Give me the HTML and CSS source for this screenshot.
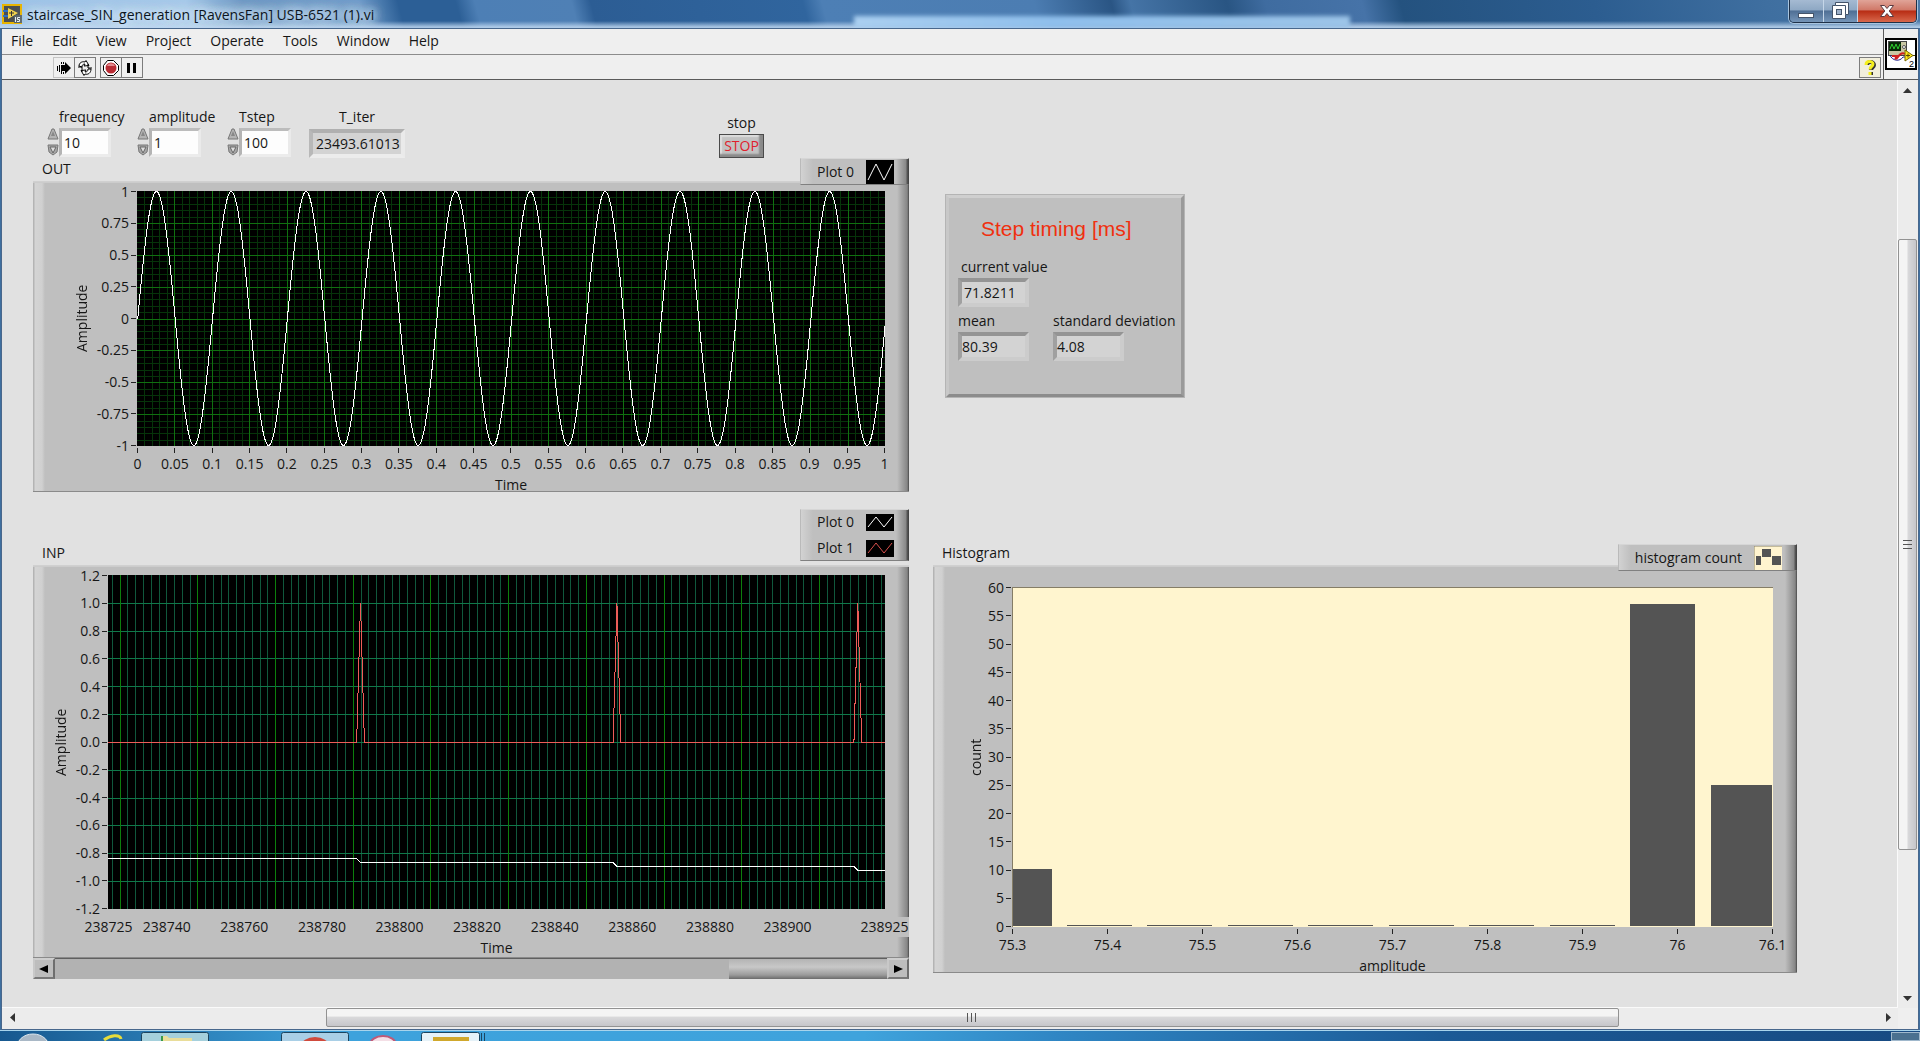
FILE: index.html
```html
<!DOCTYPE html>
<html lang="en">
<head>
<meta charset="utf-8">
<title>staircase_SIN_generation</title>
<link rel="stylesheet" href="styles.css">
</head>
<body>
<header class="titlebar">
  <svg class="app-icon" width="20" height="20" viewBox="0 0 20 20" aria-hidden="true">
    <rect x="1" y="1" width="18" height="18" fill="#4a4f52" stroke="#e8b400" stroke-width="2"/>
    <path d="M6 4 L16 9 L6 15 Z" fill="#f4d44c"/>
    <path d="M1 7h5M1 12h5" stroke="#2b6fc2" stroke-width="2"/>
    <path d="M7 9h5M9.500 7v5" stroke="#333" stroke-width="1"/>
    <path d="M12 11h8v8h-8z" fill="#5a6468"/>
    <path d="M13.500 13v5M18 13.500h-2.500v2h2v2h-2.500" stroke="#e8eef2" stroke-width="1" fill="none"/>
  </svg>
  <h1 class="title">staircase_SIN_generation [RavensFan] USB-6521 (1).vi</h1>
  <div class="behind"></div>
  <div class="win-buttons">
    <button class="win-btn" aria-label="Minimize"><svg width="18" height="18" viewBox="0 0 18 18"><rect x="1.500" y="11.500" width="15" height="4" fill="#fff" stroke="#44546a"/></svg></button>
    <button class="win-btn" aria-label="Restore"><svg width="18" height="18" viewBox="0 0 18 18"><path d="M4.500 .5h13v12h-3v4h-13v-13h3z" fill="#fff" stroke="#44546a"/><path d="M4.500 3.500h10v9" fill="none" stroke="#44546a"/><rect x="5.500" y="7.500" width="5" height="5" fill="#9db0c8" stroke="#44546a"/></svg></button>
    <button class="win-btn win-close" aria-label="Close"><svg width="18" height="18" viewBox="0 0 18 18"><path d="M2.500 3.500h4l2.500 3 2.500-3h4l-4.300 5.500 4.300 5.500h-4l-2.500-3-2.500 3h-4l4.300-5.500z" fill="#fff" stroke="#5a3a40"/></svg></button>
  </div>
</header>

<div class="window">
  <div class="bars">
    <div class="bars-main">
      <nav class="menu">
        <button>File</button><button>Edit</button><button>View</button><button>Project</button><button>Operate</button><button>Tools</button><button>Window</button><button>Help</button>
      </nav>
      <div class="toolbar">
        <button class="tool tool-run" aria-label="Run"><svg width="18" height="18" viewBox="0 0 18 18"><path d="M7 6h3V3l6 6-6 6v-3H7z"/><path d="M2.500 7v5M4.500 6v7M6.500 6v7" stroke="#000"/><path d="M6.500 3v2M8.500 3v2M6.500 13v2M8.500 13v2" stroke="#000"/></svg></button>
        <button class="tool" aria-label="Run continuously"><svg width="18" height="18" viewBox="0 0 18 18" fill="#fff" stroke="#000"><path d="M3 7c0-3 3-5 6-4l1-1.500 3 5-5 .5 1-2c-2 0-3 1-3 3z"/><path d="M15 10c0 4-3 6-6 5l-1 1.500-3-5 5-.5-1 2c2 0 3-1 3-3z"/><path d="M2 8h4v5M16 9h-4V5" fill="none"/></svg></button>
        <button class="tool tool-abort" aria-label="Abort"><svg width="18" height="18" viewBox="0 0 18 18"><path d="M5.500 1.500h6l5 5v5l-5 5h-6l-4-5v-5z" fill="#fff" stroke="#000"/><circle cx="9" cy="9" r="5.500" fill="#b82c34"/><path d="M5 7c1-3 6-4 8 0z" fill="#e28a8e"/></svg></button>
        <button class="tool" aria-label="Pause"><svg width="18" height="18" viewBox="0 0 18 18"><path d="M4 4h3v10H4zM10 4h3v10h-3z"/></svg></button>
        <button class="tool tool-help" aria-label="Context help"><svg width="18" height="18" viewBox="0 0 18 18" fill="none"><path d="M6 6c0-4 7-4 7 0 0 3-3 2-3 5M10 13v3" stroke="#333" stroke-width="4"/><path d="M5 6c0-5 7-4 7-1 0 3-3 2-3 5.500M9 13v3" stroke="#f5f01c" stroke-width="3"/></svg></button>
      </div>
    </div>
    <div class="vi-icon">
      <svg width="32" height="32" viewBox="0 0 32 32" aria-label="VI icon">
        <rect x="1" y="1" width="30" height="30" fill="#fff" stroke="#000" stroke-width="2"/>
        <rect x="3.500" y="3.500" width="18" height="14" fill="#c9c7a4" stroke="#444"/>
        <rect x="4" y="4" width="12" height="9" fill="#082808"/>
        <path d="M5 11l2-5 2 5 2-5 2 5 2-5" fill="none" stroke="#2fd02f"/>
        <circle cx="19" cy="9" r="1.500" fill="#fff" stroke="#555"/>
        <path d="M5 17c2 6 10 7 13 2h3" fill="none" stroke="#20208c"/>
        <path d="M7 18h5c-3 3-1 4 1 1s4-5 7-3" fill="none" stroke="#d02020" stroke-width="2"/>
        <path d="M20 12l8 5.500-8 5.500z" fill="#ffe81c" stroke="#7a6a00"/><path d="M28 17.500h2M21 17.500h4M23 15.500v4" stroke="#5a4800"/>
        <text x="24" y="29" class="vi-num">2</text>
      </svg>
    </div>
  </div>

  <div class="work">
    <main class="panel">
      <section class="col">
        <div class="controls">
          <div class="numeric">
            <div class="spin"><button aria-label="Increase frequency"><svg width="12" height="12" viewBox="0 0 12 12"><path d="M1 11l4-10h2l4 10z" fill="#b4b4b4" stroke="#777"/><path d="M4 8l2-5 2 5z" fill="#888"/></svg></button><button aria-label="Decrease frequency"><svg width="12" height="12" viewBox="0 0 12 12"><path d="M1 1h10l-1 7-4 3-4-3z" fill="#a8a8a8" stroke="#777"/><path d="M3 3h6l-3 6z" fill="#ddd" stroke="#666"/></svg></button></div>
            <label for="freq">frequency</label><input id="freq" type="text" value="10">
          </div>
          <div class="numeric">
            <div class="spin"><button aria-label="Increase amplitude"><svg width="12" height="12" viewBox="0 0 12 12"><path d="M1 11l4-10h2l4 10z" fill="#b4b4b4" stroke="#777"/><path d="M4 8l2-5 2 5z" fill="#888"/></svg></button><button aria-label="Decrease amplitude"><svg width="12" height="12" viewBox="0 0 12 12"><path d="M1 1h10l-1 7-4 3-4-3z" fill="#a8a8a8" stroke="#777"/><path d="M3 3h6l-3 6z" fill="#ddd" stroke="#666"/></svg></button></div>
            <label for="ampl">amplitude</label><input id="ampl" type="text" value="1">
          </div>
          <div class="numeric">
            <div class="spin"><button aria-label="Increase Tstep"><svg width="12" height="12" viewBox="0 0 12 12"><path d="M1 11l4-10h2l4 10z" fill="#b4b4b4" stroke="#777"/><path d="M4 8l2-5 2 5z" fill="#888"/></svg></button><button aria-label="Decrease Tstep"><svg width="12" height="12" viewBox="0 0 12 12"><path d="M1 1h10l-1 7-4 3-4-3z" fill="#a8a8a8" stroke="#777"/><path d="M3 3h6l-3 6z" fill="#ddd" stroke="#666"/></svg></button></div>
            <label for="tstep">Tstep</label><input id="tstep" type="text" value="100">
          </div>
          <div class="readout readout-iter"><label for="titer">T_iter</label><output id="titer" class="field">23493.61013</output></div>
          <div class="stop"><label for="stop">stop</label><button id="stop" class="stop-btn">STOP</button></div>
        </div>

        <div class="chart-head">
          <h2>OUT</h2>
          <div class="legend legend-join"><span class="legend-row">Plot 0 <svg width="28" height="24" viewBox="0 0 28 24"><rect width="28" height="24"/><path d="M2 20L10 4l8 16 8-16" fill="none" stroke="#fff"/></svg></span></div>
        </div>
        <div class="chart chart-out">
          <div class="y-title">Amplitude</div>
          <div class="y-axis"><span>1</span><span>0.75</span><span>0.5</span><span>0.25</span><span>0</span><span>-0.25</span><span>-0.5</span><span>-0.75</span><span>-1</span></div>
          <svg class="plot" id="plot-out" viewBox="0 0 748 255" preserveAspectRatio="none"></svg>
          <div class="x-axis"><span>0</span><span>0.05</span><span>0.1</span><span>0.15</span><span>0.2</span><span>0.25</span><span>0.3</span><span>0.35</span><span>0.4</span><span>0.45</span><span>0.5</span><span>0.55</span><span>0.6</span><span>0.65</span><span>0.7</span><span>0.75</span><span>0.8</span><span>0.85</span><span>0.9</span><span>0.95</span><span>1</span></div>
          <div class="x-title">Time</div>
        </div>

        <div class="chart-head chart-head-inp">
          <h2>INP</h2>
          <div class="legend legend-two">
            <span class="legend-row">Plot 0 <svg width="28" height="17" viewBox="0 0 28 17"><rect width="28" height="17"/><path d="M2 13l8-10 8 10 8-10" fill="none" stroke="#fff"/></svg></span>
            <span class="legend-row">Plot 1 <svg width="28" height="17" viewBox="0 0 28 17"><rect width="28" height="17"/><path d="M2 13l8-10 8 10 8-10" fill="none" stroke="#d8504c"/></svg></span>
          </div>
        </div>
        <div class="chart chart-inp">
          <div class="y-title">Amplitude</div>
          <div class="y-axis"><span>1.2</span><span>1.0</span><span>0.8</span><span>0.6</span><span>0.4</span><span>0.2</span><span>0.0</span><span>-0.2</span><span>-0.4</span><span>-0.6</span><span>-0.8</span><span>-1.0</span><span>-1.2</span></div>
          <svg class="plot" id="plot-inp" viewBox="0 0 777 334" preserveAspectRatio="none"></svg>
          <div class="x-axis"><span>238725</span><span>238740</span><span>238760</span><span>238780</span><span>238800</span><span>238820</span><span>238840</span><span>238860</span><span>238880</span><span>238900</span><span><b>238925</b></span></div>
          <div class="x-title">Time</div>
        </div>
        <div class="chart-scroll">
          <button class="cs-arrow" aria-label="Scroll left"><svg width="10" height="10" viewBox="0 0 10 10"><path d="M0 5l9-4v8z"/></svg></button>
          <div class="cs-track"><div class="cs-thumb"></div></div>
          <button class="cs-arrow" aria-label="Scroll right"><svg width="10" height="10" viewBox="0 0 10 10"><path d="M10 5L1 1v8z"/></svg></button>
        </div>
      </section>

      <section class="col">
        <div class="timing">
          <h2 class="timing-title">Step timing [ms]</h2>
          <div class="readout readout-current"><label for="cur">current value</label><output id="cur" class="field">71.8211</output></div>
          <div class="readout"><label for="mean">mean</label><output id="mean" class="field">80.39</output></div>
          <div class="readout"><label for="sd">standard deviation</label><output id="sd" class="field">4.08</output></div>
        </div>

        <div class="chart-head chart-head-hist">
          <h2>Histogram</h2>
          <div class="legend legend-join legend-hist"><span class="legend-row">histogram count <svg width="28" height="24" viewBox="0 0 28 24"><rect width="28" height="24" fill="#fff4cf"/><path d="M0 24V0h28" fill="none" stroke="#8a8268"/><path d="M2 10h5v9H2zM8 3h9v8H8zM18 10h9v9h-9z" fill="#545454"/></svg></span></div>
        </div>
        <div class="chart chart-hist">
          <div class="y-title">count</div>
          <div class="y-axis"><span>60</span><span>55</span><span>50</span><span>45</span><span>40</span><span>35</span><span>30</span><span>25</span><span>20</span><span>15</span><span>10</span><span>5</span><span>0</span></div>
          <svg class="plot plot-light" id="plot-hist" viewBox="0 0 761 340" preserveAspectRatio="none"></svg>
          <div class="x-axis"><span>75.3</span><span>75.4</span><span>75.5</span><span>75.6</span><span>75.7</span><span>75.8</span><span>75.9</span><span>76</span><span>76.1</span></div>
          <div class="x-title">amplitude</div>
        </div>
      </section>
    </main>

    <div class="vscroll">
      <button class="arrow" aria-label="Scroll up"><svg width="9" height="5" viewBox="0 0 9 5"><path d="M0 5l4.500-5L9 5z" fill="#333"/></svg></button>
      <div class="before"></div><div class="thumb"><svg width="9" height="10" viewBox="0 0 9 10"><path d="M0 .5h9M0 4.500h9M0 8.500h9" stroke="#555"/></svg></div><div class="after"></div>
      <button class="arrow" aria-label="Scroll down"><svg width="9" height="5" viewBox="0 0 9 5"><path d="M0 0l4.500 5L9 0z" fill="#333"/></svg></button>
    </div>
    <div class="hscroll">
      <button class="arrow" aria-label="Scroll panel left"><svg width="5" height="9" viewBox="0 0 5 9"><path d="M5 0L0 4.500 5 9z" fill="#333"/></svg></button>
      <div class="before"></div><div class="thumb"><svg width="10" height="9" viewBox="0 0 10 9"><path d="M.5 0v9M4.500 0v9M8.500 0v9" stroke="#555"/></svg></div><div class="after"></div>
      <button class="arrow" aria-label="Scroll panel right"><svg width="5" height="9" viewBox="0 0 5 9"><path d="M0 0l5 4.500L0 9z" fill="#333"/></svg></button>
    </div>
    <div class="corner"></div>
  </div>
</div>

<footer class="taskbar">
  <svg width="486" height="9" viewBox="0 0 486 9" aria-hidden="true">
    <ellipse cx="33" cy="17" rx="17" ry="15" fill="#a9b8c6" stroke="#dce8f0"/>
    <path d="M104 8c6-5 16-6 17-1" fill="none" stroke="#e6dc3c" stroke-width="3"/>
    <rect x="141.500" y=".5" width="67" height="12" rx="2" fill="#a5d0dc" stroke="#1b4560"/>
    <path d="M161 4h6l2 2h23v4h-31z" fill="#e9dd9a"/><path d="M162 4v6" stroke="#3a9a4a" stroke-width="2"/>
    <rect x="281.500" y=".5" width="67" height="12" rx="2" fill="#a9cfe6" stroke="#1b4560"/>
    <ellipse cx="315" cy="14" rx="14" ry="9" fill="#d04a3c"/>
    <ellipse cx="383" cy="13" rx="13" ry="9" fill="#f4dfe6" stroke="#c05a78" stroke-width="2"/>
    <rect x="421.500" y=".5" width="58" height="12" rx="2" fill="#e6f2f8" stroke="#1b4560"/>
    <rect x="433" y="5" width="36" height="6" fill="#d0a82c"/>
    <path d="M481.500 1v9M484.500 1v9" stroke="#1b4560"/>
  </svg>
  <div class="tray"></div>
</footer>
<script src="charts.js"></script>
</body>
</html>
```

FILE: styles.css
```css
* { box-sizing: border-box; }

body {
  margin: 0;
  min-height: 100vh;
  display: flex;
  flex-direction: column;
  background: #3f6f9f;
  color: #161616;
  font: 14px/20px "Open Sans", "Noto Sans", sans-serif;
}

button { font: inherit; color: inherit; padding: 0; border: 0; background: none; }
svg { display: block; }
h1, h2 { margin: 0; font-size: 14px; font-weight: 400; }

/* title bar */
.titlebar {
  height: 28px;
  display: flex;
  align-items: flex-start;
  padding-left: 2px;
  overflow: hidden;
  background:
    linear-gradient(rgba(190, 215, 240, 0) 21px, rgba(190, 215, 240, .85) 27px),
    linear-gradient(75deg, #9cc2e6 0, #a6c9e9 10%, #6c98c4 13%, #6f9cca 19%, #2c5f96 21%, #2c5f96 24%, #4d7fb5 25%, #4f80b5 30%, #2c5d94 31%, #30659e 42%, #4d7fb5 43%, #4c7db2 54%, #2a5584 58%, #4574a6 59%, #295583 64%, #3f6ca0 66%, #4673a8 71%, #24527f 73%, #2c5d90 83%, #3f6fa0 92%, #4d7aa8 100%);
}
.app-icon { margin-top: 4px; }
.title {
  margin: 5px 0 0 5px;
  line-height: 20px;
  white-space: nowrap;
  color: #0c1420;
  text-shadow: 0 0 8px #d6e8f8, 0 0 8px #d6e8f8, 0 0 14px #d6e8f8, 0 0 14px #d6e8f8;
}
.behind {
  width: 496px;
  height: 12px;
  margin: 16px auto 0;
  background: linear-gradient(90deg, #aacff0, #8fbfec 40%, #9cc4e8);
  border-left: 40px solid transparent;
  box-sizing: content-box;
  background-clip: padding-box;
  filter: blur(2px);
}
.win-buttons {
  display: flex;
  height: 23px;
  margin-right: 3px;
  border: 1px solid #1f3148;
  border-top: 0;
  border-radius: 0 0 5px 5px;
  overflow: hidden;
  box-shadow: 0 0 0 1px #a8c4de;
}
.win-btn {
  width: 34px;
  display: grid;
  place-items: center;
  border-right: 1px solid #c5d6e8;
  background: linear-gradient(#a5bad2 0, #8ea8c4 45%, #4f6f95 50%, #7595b8 100%);
}
.win-close { width: 58px; border: 0; background: linear-gradient(#e0a498 0, #d07868 45%, #b82c14 50%, #d8684c 100%); }

/* window frame */
.window {
  flex: 1;
  display: flex;
  flex-direction: column;
  margin: 0 1px;
  border: 1px solid #48678c;
  background: #efefef;
}
.bars { display: flex; height: 51px; border-bottom: 1px solid #5a5a5a; }
.bars-main { flex: 1; }
.menu { display: flex; gap: 19px; height: 26px; padding: 1px 9px 3px; border-bottom: 1px solid #8c8c8c; }
.toolbar { display: flex; padding: 2px 2px 0 51px; }
.tool {
  width: 22px;
  height: 21px;
  margin-right: -1px;
  display: grid;
  place-items: center;
  border: 1px solid #7c7c7c;
}
.tool-run { border-color: #c4c4c4; }
.tool-abort { margin-left: 5px; }
.tool-help { margin: 0 0 0 auto; background: #f2efdc; }
.vi-icon { width: 35px; border-left: 1px solid #5a5a5a; display: grid; place-items: center; }
.vi-num { font: 9px "Liberation Sans", sans-serif; }

/* work area with scroll bars */
.work { flex: 1; display: grid; grid-template-columns: 1fr 20px; grid-template-rows: 1fr 21px; }
.panel {
  background: #e1e1e1;
  display: grid;
  grid-template-columns: 876fr 864fr;
  column-gap: 24px;
  padding: 25px 100px 16px 31px;
  border-right: 1px solid #fafafa;
  border-bottom: 1px solid #fafafa;
}
.col { min-width: 0; display: flex; flex-direction: column; }

.vscroll, .hscroll { display: flex; background: #ececec; }
.vscroll { flex-direction: column; padding-right: 1px; }
.hscroll { padding-bottom: 2px; }
.arrow { flex: 0 0 20px; display: grid; place-items: center; }
.thumb { display: grid; place-items: center; border: 1px solid #929292; border-radius: 2px; }
.vscroll .before { flex: 139; }
.vscroll .thumb { flex: 612; background: linear-gradient(90deg, #f4f4f4 0 45%, #d8d8da 55%, #c6c6ca); }
.vscroll .after { flex: 138; }
.hscroll .before { flex: 304; }
.hscroll .thumb { flex: 1292; background: linear-gradient(#f4f4f4 0 40%, #d8d8da 50%, #c6c6ca); }
.hscroll .after { flex: 259; }
.corner { background: #efefef; }

/* controls */
.controls { display: flex; height: 53px; padding-left: 14px; }
.numeric {
  width: 90px;
  display: grid;
  grid-template-columns: 12px 52px;
  grid-template-rows: 22px 30px;
}
.numeric label { grid-column: 2; padding-top: 2px; white-space: nowrap; }
.numeric .spin { grid-row: 2; display: flex; flex-direction: column; justify-content: space-between; padding: 1px 0; }
.numeric input {
  width: 100%;
  height: 29px;
  margin-top: 1px;
  padding: 0 0 0 2px;
  font: inherit;
  color: inherit;
  background: #fdfdfd;
  border: 3px solid;
  border-color: #bcbcbc #eaeaea #ececec #b4b4b4;
}
.spin button { width: 12px; height: 12px; }

.readout { display: flex; flex-direction: column; }
.readout label { height: 21px; white-space: nowrap; }
.field {
  width: 71px;
  height: 29px;
  padding: 1px 0 0 0;
  background: #d3d3d3;
  border: 4px solid;
  border-color: #949494 #cccccc #cccccc #a0a0a0;
}
.readout-iter { align-items: center; margin: 2px 0 0 -8px; }
.readout-iter label { height: 22px; }
.readout-iter .field { width: 96px; padding-left: 3px; border-color: #b0b0b0 #eaeaea #ececec #b8b8b8; }

.stop { display: flex; flex-direction: column; align-items: center; margin: 8px 0 0 314px; }
.stop-btn {
  width: 45px;
  height: 26px;
  margin-top: 1px;
  color: #e0202c;
  background: #c2c2c2;
  border: 1px solid #4a4a4a;
  box-shadow: inset -4px -3px 2px #8a8a8a, inset 2px 2px 1px #dcdcdc;
}

/* chart headers and legends */
.chart-head { display: flex; justify-content: space-between; align-items: flex-end; height: 23px; padding-left: 9px; }
.chart-head h2 { margin-bottom: 2px; }
.chart-head-inp { height: 56px; margin-top: 17px; align-items: stretch; }
.chart-head-inp h2 { align-self: flex-end; }
.chart-head-hist { height: 21px; margin-top: 146px; }
.legend {
  display: flex;
  flex-direction: column;
  justify-content: center;
  padding: 0 14px 0 16px;
  background:
    linear-gradient(90deg, #d2d2d2, #bfbfbf) left / 12px 100% no-repeat,
    linear-gradient(90deg, #bfbfbf, #8a8a8a 80%, #444) right / 12px 100% no-repeat,
    #bfbfbf;
  border: 1px solid;
  border-color: #d6d6d6 #444 #808080 #bababa;
}
.legend-join { height: 27px; z-index: 1; margin-bottom: -4px; }
.legend-hist { margin-bottom: -6px; }
.legend-two { margin-bottom: 4px; gap: 6px; }
.legend-two .legend-row { height: 20px; }
.legend-row { display: flex; align-items: center; justify-content: space-between; gap: 12px; }

/* charts */
.chart {
  display: grid;
  grid-template-rows: auto 28px 18px;
  padding: 10px 24px 0 0;
  overflow: hidden;
  background:
    linear-gradient(#d2d2d2, #cacaca) top / 100% 2px no-repeat,
    linear-gradient(#8a8a8a, #8a8a8a) bottom / 100% 1px no-repeat,
    linear-gradient(90deg, #b4b4b4 1px, #d4d4d4 2px, #d0d0d0 9px, #bfbfbf) left / 12px 100% no-repeat,
    linear-gradient(90deg, #bfbfbf, #868686 85%, #484848) right / 12px 100% no-repeat,
    #bfbfbf;
}
.chart-out { grid-template-columns: 59px 45px 1fr; }
.chart-inp { grid-template-columns: 38px 37px 1fr; grid-template-rows: auto 28px 21px; }
.chart-hist { grid-template-columns: 53px 26px 1fr; padding-top: 22px; }

.y-title {
  writing-mode: vertical-rl;
  transform: rotate(180deg);
  text-align: center;
  justify-self: end;
}
.y-axis { display: flex; flex-direction: column; justify-content: space-between; padding-right: 1px; }
.y-axis span { height: 1px; display: flex; justify-content: flex-end; align-items: center; gap: 2px; }
.y-axis span::after { content: ""; width: 5px; height: 1px; background: #222; }
.plot { width: 100%; background: #000; shape-rendering: crispEdges; }
.plot-light { background: #fff5cf; }
#plot-out { height: 255px; }
#plot-inp { height: 334px; }
#plot-hist { height: 340px; }
.plot line, .plot polyline, .plot path { vector-effect: non-scaling-stroke; fill: none; }
.plot .minor { stroke: #06340a; }
.plot .major { stroke: #107010; }
.plot .teal-minor { stroke: #10583c; }
.plot .teal { stroke: #10784a; }
.plot .green { stroke: #0c7e0c; }
.plot .white { stroke: #fff; }
.plot .red { stroke: #ee5c58; }
.plot .frame { stroke: #857d66; }
.plot .bar { fill: #545454; }

.x-axis { grid-column: 3; display: flex; justify-content: space-between; padding-top: 2px; }
.x-axis span { width: 1px; display: flex; flex-direction: column; align-items: center; gap: 1px; white-space: nowrap; }
.x-axis span::before { content: ""; flex: 0 0 5px; width: 1px; background: #222; }
.x-axis b { font-weight: 400; background: #bfbfbf; }
.chart-inp .x-axis { display: grid; grid-template-columns: 15fr repeat(8, 20fr) 25fr 1px; }
.chart-inp .x-axis span::before { background: none; }
.x-title { grid-column: 3; padding-top: 1px; text-align: center; height: 100%; overflow: hidden; }

.chart-scroll { display: flex; height: 21px; background: #b2b2b2; }
.cs-arrow {
  width: 22px;
  display: grid;
  place-items: center;
  background: #bdbdbd;
  border: 2px solid;
  border-color: #cecece #6e6e6e #787878 #c8c8c8;
}
.cs-track { flex: 1; display: flex; justify-content: flex-end; border-top: 1px solid #606060; }
.cs-thumb { width: 19%; background: linear-gradient(#b4b4b4, #c8c8c8 40%, #9a9a9a 80%, #6a6a6a); }

/* step timing box */
.timing {
  width: 240px;
  height: 204px;
  margin: 89px 0 0 12px;
  padding: 19px 0 0 9px;
  display: grid;
  grid-template-columns: 95px 1fr;
  grid-template-rows: 40px 54px 1fr;
  background: #bfbfbf;
  border: 4px solid;
  border-color: #cfcfcf #9a9a9a #8c8c8c #c8c8c8;
  outline: 1px solid #b4b4b4;
  outline-offset: -1px;
}
.timing-title { grid-column: 1 / 3; padding-left: 23px; font: 21px/24px "Liberation Sans", sans-serif; color: #f0300f; }
.readout-current { grid-column: 1 / 3; }
.readout-current label { padding-left: 3px; }
.readout-current .field { padding-left: 2px; }

/* task bar */
.taskbar {
  height: 11px;
  display: flex;
  justify-content: space-between;
  padding-top: 1px;
  border-top: 1px solid #a8d4ec;
  background: linear-gradient(90deg, #17588f, #3da2dc 18%, #3fa3dc 45%, #2f86c4 55%, #1b5a96 75%, #174a82);
  overflow: hidden;
}
.tray { width: 29px; border: 1px solid #a0b8cc; background: #4a7090; }
```

FILE: charts.js
```js
const NS = "http://www.w3.org/2000/svg";

function add(svg, name, cls, attrs) {
  const el = document.createElementNS(NS, name);
  el.setAttribute("class", cls);
  for (const key in attrs) el.setAttribute(key, attrs[key]);
  svg.appendChild(el);
}

function vline(svg, cls, x, height) {
  add(svg, "line", cls, { x1: x, x2: x, y1: 0, y2: height });
}

function hline(svg, cls, y, width) {
  add(svg, "line", cls, { x1: 0, x2: width, y1: y, y2: y });
}

function snap(v) {
  return Math.round(v) + 0.5;
}

/* OUT: ten periods of a sine over one second */
const out = document.getElementById("plot-out");
for (const cls of ["minor", "major"]) {
  for (let i = 1; i < 100; i++) {
    if ((i % 5 === 0) === (cls === "major")) vline(out, cls, snap(i * 7.48), 255);
  }
  for (let i = 1; i < 40; i++) {
    if ((i % 5 === 0) === (cls === "major")) hline(out, cls, snap(i * 6.375), 748);
  }
}
const wave = [];
for (let i = 0; i <= 1000; i++) {
  const v = i === 0 ? 0 : Math.sin(2 * Math.PI * (i - 1) / 100);
  wave.push((i * 0.748).toFixed(2) + "," + (127.5 - v * 127).toFixed(2));
}
add(out, "polyline", "white", { points: wave.join(" ") });

/* INP: strip chart, 200 samples wide */
const inp = document.getElementById("plot-inp");
const sx = n => n * 3.885;
for (let n = 1; n < 200; n += 2) {
  if (n % 20 !== 3) vline(inp, "teal-minor", snap(sx(n)), 334);
}
for (let i = 1; i < 12; i++) hline(inp, "teal", snap(i * 27.83), 777);
for (let n = 3; n < 200; n += 20) vline(inp, "green", snap(sx(n)), 334);
const base = 167.5;
const spikes = [65, 131, 193];
let red = "0," + base;
for (const n of spikes) {
  red += ` ${sx(n - 1)},${base} ${sx(n)},28 ${sx(n + 1)},${base}`;
}
add(inp, "polyline", "red", { points: red + " 777," + base });
let level = 283.5;
let white = "0," + level;
for (const n of spikes) {
  white += ` ${sx(n - 1)},${level} ${sx(n)},${level + 4}`;
  level += 4;
}
add(inp, "polyline", "white", { points: white + " 777," + level });

/* Histogram: [left, right, height] of each bar */
const hist = document.getElementById("plot-hist");
const bars = [
  [1, 40, 57], [55, 120, 1], [135, 200, 1], [216, 281, 1], [296, 361, 1],
  [377, 442, 1], [457, 522, 1], [538, 603, 1], [618, 683, 322], [699, 760, 141]
];
for (const [left, right, h] of bars) {
  add(hist, "rect", "bar", { x: left, y: 339 - h, width: right - left, height: h });
}
add(hist, "path", "frame", { d: "M.5 340V.5H761" });
```
